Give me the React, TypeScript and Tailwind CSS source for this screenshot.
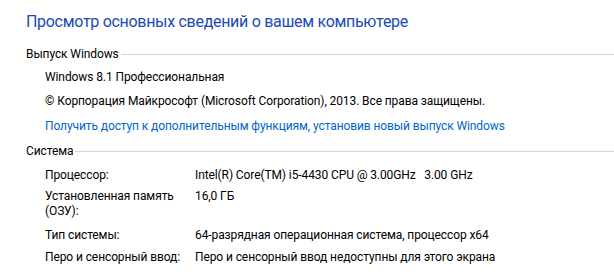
import React from 'react';

const rows: { label: string[]; value: string; gap: string }[] = [
    { label: ['Процессор:'], value: 'Intel(R) Core(TM) i5-4430 CPU @ 3.00GHz\u00a0\u00a0\u00a03.00 GHz', gap: 'mt-[8px]' },
    { label: ['Установленная память', '(ОЗУ):'], value: '16,0 ГБ', gap: 'mt-[6px]' },
    { label: ['Тип системы:'], value: '64-разрядная операционная система, процессор x64', gap: 'mt-[8px]' },
    { label: ['Перо и сенсорный ввод:'], value: 'Перо и сенсорный ввод недоступны для этого экрана', gap: 'mt-[6px]' },
];

const SectionHeading: React.FC<{ title: string; className?: string }> = ({ title, className }) => (
    <div className={`flex items-center h-4 ${className ?? ''}`}>
        <span className="leading-4 pr-[2px]">{title}</span>
        <div className="flex-1 h-px bg-[#d5d5d5] mt-[1px]" />
    </div>
);

const App: React.FC = () => {
    return (
        <div className="w-[614px] h-[278px] bg-white text-black text-[12px] tracking-[-0.1px] overflow-hidden font-['Roboto','Noto_Sans',sans-serif]">
            <div className="pl-[26px] pt-[8px]">
                <h1 className="text-[16px] leading-7 tracking-[-0.3px] text-[#1c4ab5] font-normal">
                    Просмотр основных сведений о вашем компьютере
                </h1>

                <SectionHeading title="Выпуск Windows" className="mt-[10px]" />
                <div className="pl-[19px]">
                    <div className="leading-4 mt-[7px]">Windows 8.1 Профессиональная</div>
                    <div className="leading-4 mt-[8px]">© Корпорация Майкрософт (Microsoft Corporation), 2013. Все права защищены.</div>
                    <a href="#" className="block leading-4 mt-[9px] text-[#0066cc]">
                        Получить доступ к дополнительным функциям, установив новый выпуск Windows
                    </a>
                </div>

                <SectionHeading title="Система" className="mt-[9px]" />
                <div className="pl-[19px]">
                    {rows.map((row, i) => (
                        <div key={i} className={`flex ${row.gap}`}>
                            <div className="w-[150px]">
                                {row.label.map((l) => (
                                    <div key={l} className={row.label.length > 1 ? 'leading-[15px]' : 'leading-4'}>{l}</div>
                                ))}
                            </div>
                            <div className={row.label.length > 1 ? 'leading-[15px]' : 'leading-4'}>{row.value}</div>
                        </div>
                    ))}
                </div>
            </div>
        </div>
    );
};

export default App;
